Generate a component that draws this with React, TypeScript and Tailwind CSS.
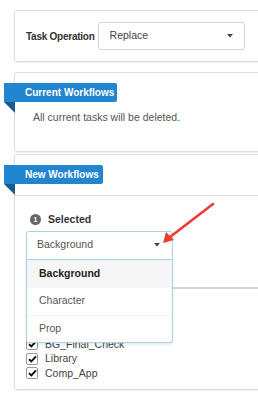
function Ribbon({ title, width }: { title: string; width: string }) {
  return (
    <div className={`relative -ml-[11px] ${width}`}>
      <div className="h-[19px] bg-[#2185d0] rounded-r-[2px] flex items-center pl-[21px] text-[10px] font-bold text-white whitespace-nowrap">
        {title}
      </div>
      <svg width="11" height="11" className="block">
        <polygon points="0,0 11,0 11,11" fill="#1a5b8c" />
      </svg>
    </div>
  )
}

function Caret() {
  return (
    <svg width="6" height="4" viewBox="0 0 6 4">
      <polygon points="0,0 6,0 3,3.5" fill="#444" />
    </svg>
  )
}

export default function App() {
  const checked = ["BG_Final_Check", "Library", "Comp_App"]
  return (
    <div className="relative w-[258px] h-[402px] overflow-hidden bg-white pl-[14px] pt-[10px] font-['Liberation_Sans',Arial,sans-serif]">
      {/* Task operation */}
      <div className="w-[260px] h-[52px] border border-[#dddddd] rounded-[3px] shadow-[0_1px_1px_rgba(0,0,0,0.06)] flex items-center pl-[11px]">
        <span className="text-[10px] font-bold text-[#333] whitespace-nowrap tracking-[-0.25px]">Task Operation</span>
        <div className="ml-[3px] w-[147px] h-[28px] border border-[#d4d4d4] rounded-[3px] flex items-center justify-between pl-[11px] pr-[11px]">
          <span className="text-[10.5px] text-[#444]">Replace</span>
          <Caret />
        </div>
      </div>

      {/* Current workflows */}
      <div className="mt-[10px] w-[260px] h-[80px] border border-[#dddddd] rounded-[3px] shadow-[0_1px_1px_rgba(0,0,0,0.06)] pt-[10px]">
        <Ribbon title="Current Workflows" width="w-[113px]" />
        <div className="-mt-[3px] pl-[18px] text-[10.5px] text-[#555]">All current tasks will be deleted.</div>
      </div>

      {/* New workflows */}
      <div className="mt-[2px] w-[260px] h-[236px] border border-[#dddddd] rounded-[3px] shadow-[0_1px_1px_rgba(0,0,0,0.06)]">
        <div className="pt-[10px] border-b border-[#e2e2e2]">
          <Ribbon title="New Workflows" width="w-[99px]" />
        </div>
        <div className="pl-[11px]">
          <div className="mt-[16px] flex items-center gap-[7px] pl-[4px]">
            <span className="w-[11px] h-[11px] rounded-full bg-[#666] text-white text-[7px] font-bold flex items-center justify-center">1</span>
            <span className="text-[10.5px] font-bold text-[#333]">Selected</span>
          </div>
          <div className="relative mt-[3px] w-[147px]">
            <div className="h-[29px] border border-[#a9d2e3] rounded-t-[3px] flex items-center justify-between pl-[10px] pr-[12px] bg-white">
              <span className="text-[10.5px] text-[#555]">Background</span>
              <Caret />
            </div>
            <div className="absolute left-0 top-full z-10 w-[147px] bg-white border border-t-0 border-[#a9d2e3] rounded-b-[3px] shadow-[0_2px_3px_rgba(0,0,0,0.08)] text-[10.5px]">
              <div className="h-[28px] bg-[#f6f6f6] flex items-center pl-[12px] font-bold text-[#222]">Background</div>
              <div className="h-[27px] flex items-center pl-[12px] text-[#555]">Character</div>
              <div className="h-[27px] flex items-center pl-[12px] text-[#555] border-t border-[#f2f2f2]">Prop</div>
            </div>
          </div>
          <div className="mt-[27px] border-b-2 border-[#d6d6d6]" />
          <div className="mt-[48px] flex flex-col">
            {checked.map((name) => (
              <label key={name} className="h-[14.6px] flex items-center gap-[7px] text-[10.5px] text-[#444] leading-none">
                <span className="w-[12px] h-[12px] border border-[#999] rounded-[2px] bg-white flex items-center justify-center">
                  <svg width="9" height="8" viewBox="0 0 9 8">
                    <path d="M1 4.2 L3.4 6.5 L8 1.3" fill="none" stroke="#111" strokeWidth="1.9" />
                  </svg>
                </span>
                {name}
              </label>
            ))}
          </div>
        </div>
      </div>

      {/* Annotation arrow */}
      <svg className="absolute left-0 top-0 pointer-events-none" width="258" height="402">
        <line x1="213" y1="204" x2="170" y2="237" stroke="#ee3b33" strokeWidth="2.6" strokeLinecap="round" />
        <polygon points="163,243 166,232 174,240" fill="#ee3b33" />
      </svg>
    </div>
  )
}
